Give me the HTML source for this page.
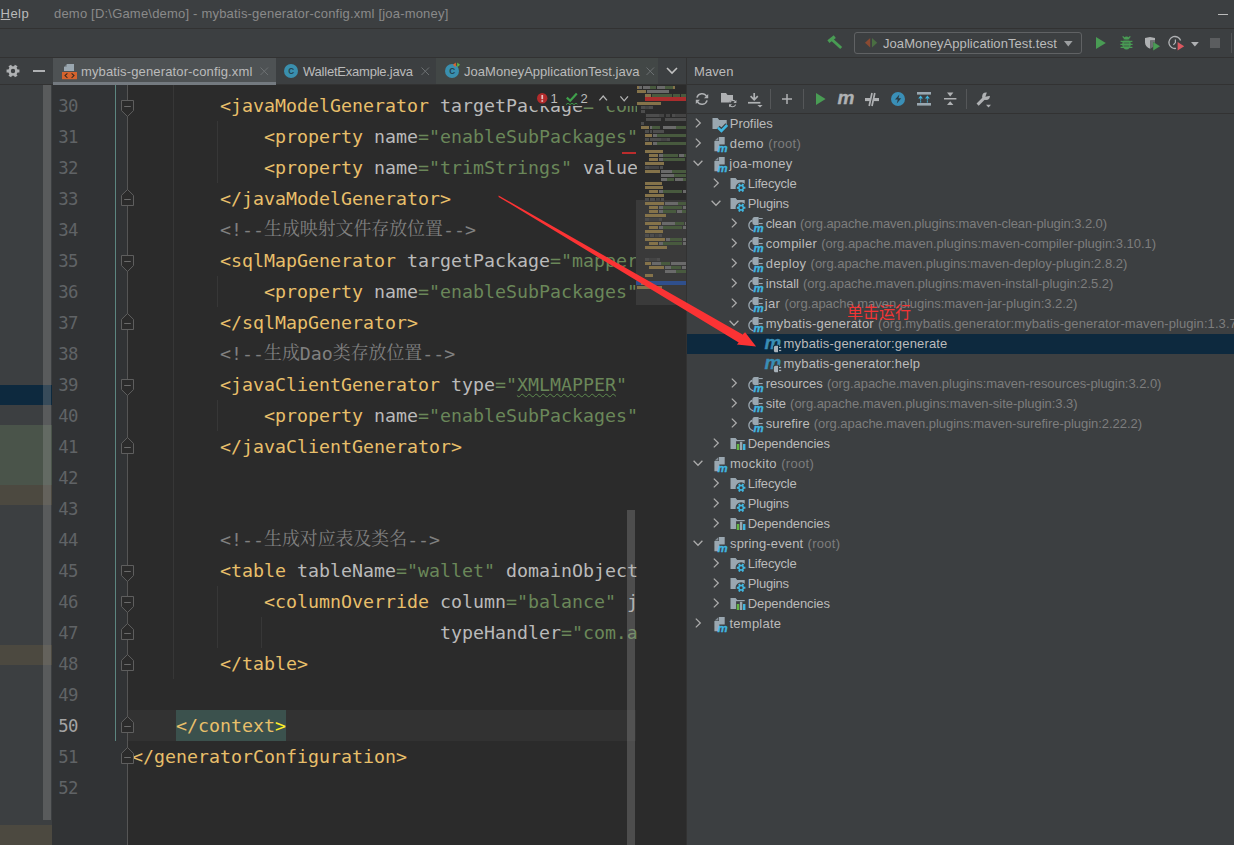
<!DOCTYPE html><html><head><meta charset="utf-8"><title>demo - mybatis-generator-config.xml</title><style>
html,body{margin:0;padding:0;background:#3c3f41;}
body{width:1234px;height:845px;overflow:hidden;position:relative;font-family:"Liberation Sans","Noto Sans CJK SC",sans-serif;font-size:13px;color:#bbbbbb;}
.a{position:absolute;}
svg{overflow:visible;}
.t{position:absolute;white-space:pre;line-height:20px;height:20px;}
.g{color:#7d7d7d;}
.code{position:absolute;white-space:pre;font-family:"DejaVu Sans Mono","Liberation Mono","Noto Serif CJK SC",monospace;font-size:18.27px;line-height:31px;height:31px;color:#a9b7c6;}
.code .k{color:#e8bf6a;}
.code .n{color:#bababa;}
.code .s{color:#6a8759;}
.code .c{color:#808080;}
.code .z{font-family:"Liberation Serif","Noto Serif CJK SC",serif;font-size:17.9px;position:relative;top:-1px;}
.code .w{text-decoration:underline wavy #5f8a4f 1px;text-underline-offset:2px;}
.ln{position:absolute;left:38px;width:40px;text-align:right;letter-spacing:-0.5px;font-family:"DejaVu Sans Mono","Liberation Mono",monospace;font-size:17.3px;line-height:31px;height:31px;color:#606366;}
</style></head><body>
<div class="a" style="left:0;top:28px;width:1234px;height:1px;background:#323232;"></div>
<div class="t" style="left:0.6px;top:4px;color:#bbbbbb;"><span style="letter-spacing:0.438px"><u>H</u>elp</span></div>
<div class="t" style="left:54px;top:4px;color:#8a8a8a;"><span style="letter-spacing:0.198px">demo [D:\Game\demo] - mybatis-generator-config.xml [joa-money]</span></div>
<div class="a" style="left:1218px;top:14px;width:10px;height:1px;background:#bbbbbb;"></div>
<div class="a" style="left:0;top:57px;width:1234px;height:1px;background:#323232;"></div>
<div class="a" style="left:854px;top:32px;width:228px;height:22px;border:1px solid #606264;border-radius:3px;box-sizing:border-box;"></div>
<div class="t" style="left:883px;top:34px;"><span style="letter-spacing:0.072px">JoaMoneyApplicationTest.test</span></div>
<div class="a" style="left:0;top:84px;width:687px;height:1px;background:#323232;"></div>
<div class="a" style="left:53px;top:58px;width:223px;height:27px;background:#4e5254;"></div>
<div class="a" style="left:53px;top:82px;width:223px;height:3px;background:#747a80;"></div>
<div class="a" style="left:436px;top:58px;width:222px;height:26px;background:#424746;"></div>
<div class="t" style="left:81px;top:62px;"><span style="letter-spacing:0.138px">mybatis-generator-config.xml</span></div>
<div class="t" style="left:303px;top:62px;"><span style="letter-spacing:-0.222px">WalletExample.java</span></div>
<div class="t" style="left:464px;top:62px;"><span style="letter-spacing:0.022px">JoaMoneyApplicationTest.java</span></div>
<div class="a" style="left:0;top:385px;width:52px;height:20px;background:#0d293e;"></div>
<div class="a" style="left:0;top:425px;width:52px;height:60px;background:#4a544a;"></div>
<div class="a" style="left:0;top:485px;width:52px;height:20px;background:#4c4940;"></div>
<div class="a" style="left:0;top:645px;width:52px;height:20px;background:#4c4940;"></div>
<div class="a" style="left:0;top:825px;width:52px;height:20px;background:#4c4940;"></div>
<div class="a" style="left:43px;top:85px;width:8px;height:735px;background:rgba(166,166,166,0.28);"></div>
<div class="a" style="left:52px;top:85px;width:634px;height:760px;background:#2b2b2b;"></div>
<div class="a" style="left:52px;top:85px;width:75px;height:760px;background:#313335;"></div>
<div class="a" style="left:127px;top:710px;width:509px;height:31px;background:#323232;"></div>
<div class="a" style="left:115px;top:85px;width:1px;height:656px;background:#5c8680;"></div>
<div class="a" style="left:127px;top:85px;width:1px;height:760px;background:#555555;"></div>
<div class="a" style="left:173px;top:85px;width:1px;height:594px;background:#373737;"></div>
<div class="a" style="left:217px;top:121px;width:1px;height:62px;background:#373737;"></div>
<div class="a" style="left:217px;top:276px;width:1px;height:31px;background:#373737;"></div>
<div class="a" style="left:217px;top:400px;width:1px;height:31px;background:#373737;"></div>
<div class="a" style="left:217px;top:586px;width:1px;height:62px;background:#373737;"></div>
<div class="a" style="left:261px;top:617px;width:1px;height:31px;background:#373737;"></div>
<svg class="a" style="left:121px;top:100px" width="13" height="17" viewBox="0 0 13 17"><path d="M0.5 0.5 H12.5 V10.6 L6.5 16.5 L0.5 10.6Z" fill="#2b2b2b" stroke="#5e5e5e" stroke-width="1"/><path d="M3.2 6.5 H9.8" stroke="#6a6a6a" stroke-width="1"/></svg>
<svg class="a" style="left:121px;top:255px" width="13" height="17" viewBox="0 0 13 17"><path d="M0.5 0.5 H12.5 V10.6 L6.5 16.5 L0.5 10.6Z" fill="#2b2b2b" stroke="#5e5e5e" stroke-width="1"/><path d="M3.2 6.5 H9.8" stroke="#6a6a6a" stroke-width="1"/></svg>
<svg class="a" style="left:121px;top:379px" width="13" height="17" viewBox="0 0 13 17"><path d="M0.5 0.5 H12.5 V10.6 L6.5 16.5 L0.5 10.6Z" fill="#2b2b2b" stroke="#5e5e5e" stroke-width="1"/><path d="M3.2 6.5 H9.8" stroke="#6a6a6a" stroke-width="1"/></svg>
<svg class="a" style="left:121px;top:565px" width="13" height="17" viewBox="0 0 13 17"><path d="M0.5 0.5 H12.5 V10.6 L6.5 16.5 L0.5 10.6Z" fill="#2b2b2b" stroke="#5e5e5e" stroke-width="1"/><path d="M3.2 6.5 H9.8" stroke="#6a6a6a" stroke-width="1"/></svg>
<svg class="a" style="left:121px;top:596px" width="13" height="17" viewBox="0 0 13 17"><path d="M0.5 0.5 H12.5 V10.6 L6.5 16.5 L0.5 10.6Z" fill="#2b2b2b" stroke="#5e5e5e" stroke-width="1"/><path d="M3.2 6.5 H9.8" stroke="#6a6a6a" stroke-width="1"/></svg>
<svg class="a" style="left:121px;top:189px" width="13" height="17" viewBox="0 0 13 17"><path d="M0.5 16.5 H12.5 V6.4 L6.5 0.5 L0.5 6.4Z" fill="#2b2b2b" stroke="#5e5e5e" stroke-width="1"/><path d="M3.2 10.5 H9.8" stroke="#6a6a6a" stroke-width="1"/></svg>
<svg class="a" style="left:121px;top:313px" width="13" height="17" viewBox="0 0 13 17"><path d="M0.5 16.5 H12.5 V6.4 L6.5 0.5 L0.5 6.4Z" fill="#2b2b2b" stroke="#5e5e5e" stroke-width="1"/><path d="M3.2 10.5 H9.8" stroke="#6a6a6a" stroke-width="1"/></svg>
<svg class="a" style="left:121px;top:437px" width="13" height="17" viewBox="0 0 13 17"><path d="M0.5 16.5 H12.5 V6.4 L6.5 0.5 L0.5 6.4Z" fill="#2b2b2b" stroke="#5e5e5e" stroke-width="1"/><path d="M3.2 10.5 H9.8" stroke="#6a6a6a" stroke-width="1"/></svg>
<svg class="a" style="left:121px;top:623px" width="13" height="17" viewBox="0 0 13 17"><path d="M0.5 16.5 H12.5 V6.4 L6.5 0.5 L0.5 6.4Z" fill="#2b2b2b" stroke="#5e5e5e" stroke-width="1"/><path d="M3.2 10.5 H9.8" stroke="#6a6a6a" stroke-width="1"/></svg>
<svg class="a" style="left:121px;top:654px" width="13" height="17" viewBox="0 0 13 17"><path d="M0.5 16.5 H12.5 V6.4 L6.5 0.5 L0.5 6.4Z" fill="#2b2b2b" stroke="#5e5e5e" stroke-width="1"/><path d="M3.2 10.5 H9.8" stroke="#6a6a6a" stroke-width="1"/></svg>
<svg class="a" style="left:121px;top:716px" width="13" height="17" viewBox="0 0 13 17"><path d="M0.5 16.5 H12.5 V6.4 L6.5 0.5 L0.5 6.4Z" fill="#2b2b2b" stroke="#5e5e5e" stroke-width="1"/><path d="M3.2 10.5 H9.8" stroke="#6a6a6a" stroke-width="1"/></svg>
<svg class="a" style="left:121px;top:747px" width="13" height="17" viewBox="0 0 13 17"><path d="M0.5 16.5 H12.5 V6.4 L6.5 0.5 L0.5 6.4Z" fill="#2b2b2b" stroke="#5e5e5e" stroke-width="1"/><path d="M3.2 10.5 H9.8" stroke="#6a6a6a" stroke-width="1"/></svg>
<div class="a" style="left:134px;top:85px;width:503px;height:760px;overflow:hidden;">
<div class="code" style="left:-2px;top:5px;">        <span class="k">&lt;javaModelGenerator</span> <span class="n">targetPackage</span><span class="s">=&quot;com.joa.money.domain&quot;</span></div>
<div class="code" style="left:-2px;top:36px;">            <span class="k">&lt;property</span> <span class="n">name</span><span class="s">=&quot;enableSubPackages&quot;</span> <span class="n">value</span><span class="s">=&quot;true&quot;</span><span class="k">/&gt;</span></div>
<div class="code" style="left:-2px;top:67px;">            <span class="k">&lt;property</span> <span class="n">name</span><span class="s">=&quot;trimStrings&quot;</span> <span class="n">value</span><span class="s">=&quot;true&quot;</span><span class="k">/&gt;</span></div>
<div class="code" style="left:-2px;top:98px;">        <span class="k">&lt;/javaModelGenerator&gt;</span></div>
<div class="code" style="left:-2px;top:129px;">        <span class="c">&lt;!--<span class="z">生成映射文件存放位置</span>--&gt;</span></div>
<div class="code" style="left:-2px;top:160px;">        <span class="k">&lt;sqlMapGenerator</span> <span class="n">targetPackage</span><span class="s">=&quot;mapper&quot;</span> <span class="n">targetProject</span><span class="s">=&quot;src/main/resources&quot;</span><span class="k">&gt;</span></div>
<div class="code" style="left:-2px;top:191px;">            <span class="k">&lt;property</span> <span class="n">name</span><span class="s">=&quot;enableSubPackages&quot;</span> <span class="n">value</span><span class="s">=&quot;true&quot;</span><span class="k">/&gt;</span></div>
<div class="code" style="left:-2px;top:222px;">        <span class="k">&lt;/sqlMapGenerator&gt;</span></div>
<div class="code" style="left:-2px;top:253px;">        <span class="c">&lt;!--<span class="z">生成</span>Dao<span class="z">类存放位置</span>--&gt;</span></div>
<div class="code" style="left:-2px;top:284px;">        <span class="k">&lt;javaClientGenerator</span> <span class="n">type</span><span class="s">=&quot;<span class="w">XMLMAPPER</span>&quot;</span></div>
<div class="code" style="left:-2px;top:315px;">            <span class="k">&lt;property</span> <span class="n">name</span><span class="s">=&quot;enableSubPackages&quot;</span> <span class="n">value</span><span class="s">=&quot;true&quot;</span><span class="k">/&gt;</span></div>
<div class="code" style="left:-2px;top:346px;">        <span class="k">&lt;/javaClientGenerator&gt;</span></div>
<div class="code" style="left:-2px;top:439px;">        <span class="c">&lt;!--<span class="z">生成对应表及类名</span>--&gt;</span></div>
<div class="code" style="left:-2px;top:470px;">        <span class="k">&lt;table</span> <span class="n">tableName</span><span class="s">=&quot;wallet&quot;</span> <span class="n">domainObjectName</span><span class="s">=&quot;Wallet&quot;</span><span class="k">&gt;</span></div>
<div class="code" style="left:-2px;top:501px;">            <span class="k">&lt;columnOverride</span> <span class="n">column</span><span class="s">=&quot;balance&quot;</span> <span class="n">javaType</span><span class="s">=&quot;java.math.BigDecimal&quot;</span></div>
<div class="code" style="left:-2px;top:532px;">                            <span class="n">typeHandler</span><span class="s">=&quot;com.alibaba.fastjson.TypeHandler&quot;</span><span class="k">/&gt;</span></div>
<div class="code" style="left:-2px;top:563px;">        <span class="k">&lt;/table&gt;</span></div>
<div class="code" style="left:-2px;top:625px;">    <span style="background:#3b514d;display:inline-block;height:31px;vertical-align:top;"><span class="k">&lt;/context</span><span style="color:#ffef28;">&gt;</span></span></div>
<div class="code" style="left:-2px;top:656px;"><span class="k">&lt;/generatorConfiguration&gt;</span></div>
</div>
<div class="ln" style="top:91px;color:#606366;">30</div>
<div class="ln" style="top:122px;color:#606366;">31</div>
<div class="ln" style="top:153px;color:#606366;">32</div>
<div class="ln" style="top:184px;color:#606366;">33</div>
<div class="ln" style="top:215px;color:#606366;">34</div>
<div class="ln" style="top:246px;color:#606366;">35</div>
<div class="ln" style="top:277px;color:#606366;">36</div>
<div class="ln" style="top:308px;color:#606366;">37</div>
<div class="ln" style="top:339px;color:#606366;">38</div>
<div class="ln" style="top:370px;color:#606366;">39</div>
<div class="ln" style="top:401px;color:#606366;">40</div>
<div class="ln" style="top:432px;color:#606366;">41</div>
<div class="ln" style="top:463px;color:#606366;">42</div>
<div class="ln" style="top:494px;color:#606366;">43</div>
<div class="ln" style="top:525px;color:#606366;">44</div>
<div class="ln" style="top:556px;color:#606366;">45</div>
<div class="ln" style="top:587px;color:#606366;">46</div>
<div class="ln" style="top:618px;color:#606366;">47</div>
<div class="ln" style="top:649px;color:#606366;">48</div>
<div class="ln" style="top:680px;color:#606366;">49</div>
<div class="ln" style="top:711px;color:#a4a3a3;">50</div>
<div class="ln" style="top:742px;color:#606366;">51</div>
<div class="ln" style="top:773px;color:#606366;">52</div>
<svg class="a" style="left:637px;top:85px" width="49" height="420" viewBox="0 0 49 420"><rect x="-1" y="115" width="50" height="105" fill="#3a3a3a"/><rect x="8" y="12" width="41" height="4" fill="#aa2d2d"/><rect x="-1" y="196" width="50" height="4" fill="#2f4f8c"/><rect x="4" y="197" width="10" height="3" fill="#7d7660"/><rect x="0" y="1" width="2" height="3" fill="#85734a"/><rect x="2" y="1" width="3" height="3" fill="#6a6a6a"/><rect x="6" y="1" width="7" height="3" fill="#6a6a6a"/><rect x="13" y="1" width="6" height="3" fill="#485a3e"/><rect x="20" y="1" width="8" height="3" fill="#6a6a6a"/><rect x="28" y="1" width="8" height="3" fill="#485a3e"/><rect x="36" y="1" width="2" height="3" fill="#85734a"/><rect x="0" y="5" width="9" height="3" fill="#85734a"/><rect x="10" y="5" width="22" height="3" fill="#6a6a6a"/><rect x="8" y="9" width="6" height="3" fill="#85734a"/><rect x="15" y="9" width="20" height="3" fill="#485a3e"/><rect x="36" y="9" width="7" height="3" fill="#485a3e"/><rect x="44" y="9" width="5" height="3" fill="#485a3e"/><rect x="0" y="17" width="24" height="3" fill="#85734a"/><rect x="4" y="21" width="4" height="3" fill="#4d4d4d"/><rect x="8" y="21" width="4" height="3" fill="#444444"/><rect x="12" y="21" width="4" height="3" fill="#4d4d4d"/><rect x="4" y="25" width="4" height="3" fill="#4d4d4d"/><rect x="9" y="29" width="13" height="3" fill="#4d4d4d"/><rect x="22" y="29" width="5" height="3" fill="#444444"/><rect x="29" y="29" width="4" height="3" fill="#444444"/><rect x="35" y="29" width="3" height="3" fill="#4d4d4d"/><rect x="38" y="29" width="11" height="3" fill="#444444"/><rect x="9" y="33" width="15" height="3" fill="#4d4d4d"/><rect x="28" y="33" width="21" height="3" fill="#4d4d4d"/><rect x="4" y="37" width="3" height="3" fill="#4d4d4d"/><rect x="4" y="41" width="8" height="3" fill="#85734a"/><rect x="13" y="41" width="2" height="3" fill="#6a6a6a"/><rect x="15" y="41" width="8" height="3" fill="#485a3e"/><rect x="26" y="41" width="13" height="3" fill="#6a6a6a"/><rect x="39" y="41" width="10" height="3" fill="#485a3e"/><rect x="8" y="45" width="4" height="3" fill="#4d4d4d"/><rect x="13" y="45" width="2" height="3" fill="#4d4d4d"/><rect x="16" y="45" width="11" height="3" fill="#4d4d4d"/><rect x="8" y="49" width="7" height="3" fill="#85734a"/><rect x="16" y="49" width="4" height="3" fill="#6a6a6a"/><rect x="20" y="49" width="29" height="3" fill="#485a3e"/><rect x="8" y="53" width="4" height="3" fill="#4d4d4d"/><rect x="13" y="53" width="11" height="3" fill="#4d4d4d"/><rect x="24" y="53" width="6" height="3" fill="#444444"/><rect x="30" y="53" width="3" height="3" fill="#4d4d4d"/><rect x="8" y="57" width="7" height="3" fill="#85734a"/><rect x="16" y="57" width="4" height="3" fill="#6a6a6a"/><rect x="20" y="57" width="29" height="3" fill="#485a3e"/><rect x="8" y="65" width="18" height="3" fill="#85734a"/><rect x="12" y="69" width="9" height="3" fill="#85734a"/><rect x="22" y="69" width="4" height="3" fill="#6a6a6a"/><rect x="26" y="69" width="15" height="3" fill="#485a3e"/><rect x="42" y="69" width="5" height="3" fill="#6a6a6a"/><rect x="47" y="69" width="2" height="3" fill="#485a3e"/><rect x="12" y="73" width="9" height="3" fill="#85734a"/><rect x="22" y="73" width="4" height="3" fill="#6a6a6a"/><rect x="26" y="73" width="22" height="3" fill="#485a3e"/><rect x="8" y="77" width="19" height="3" fill="#85734a"/><rect x="8" y="81" width="4" height="3" fill="#4d4d4d"/><rect x="12" y="81" width="10" height="3" fill="#444444"/><rect x="23" y="81" width="3" height="3" fill="#4d4d4d"/><rect x="8" y="85" width="15" height="3" fill="#85734a"/><rect x="24" y="85" width="11" height="3" fill="#6a6a6a"/><rect x="35" y="85" width="14" height="3" fill="#485a3e"/><rect x="24" y="89" width="13" height="3" fill="#6a6a6a"/><rect x="37" y="89" width="12" height="3" fill="#485a3e"/><rect x="24" y="93" width="6" height="3" fill="#6a6a6a"/><rect x="30" y="93" width="7" height="3" fill="#485a3e"/><rect x="38" y="93" width="8" height="3" fill="#6a6a6a"/><rect x="46" y="93" width="3" height="3" fill="#485a3e"/><rect x="8" y="97" width="17" height="3" fill="#85734a"/><rect x="8" y="101" width="18" height="3" fill="#85734a"/><rect x="12" y="105" width="9" height="3" fill="#85734a"/><rect x="22" y="105" width="4" height="3" fill="#6a6a6a"/><rect x="26" y="105" width="19" height="3" fill="#485a3e"/><rect x="46" y="105" width="3" height="3" fill="#6a6a6a"/><rect x="8" y="109" width="19" height="3" fill="#85734a"/><rect x="8" y="113" width="4" height="3" fill="#4d4d4d"/><rect x="13" y="113" width="5" height="3" fill="#4d4d4d"/><rect x="19" y="113" width="4" height="3" fill="#444444"/><rect x="24" y="113" width="3" height="3" fill="#4d4d4d"/><rect x="8" y="117" width="19" height="3" fill="#85734a"/><rect x="28" y="117" width="13" height="3" fill="#6a6a6a"/><rect x="41" y="117" width="8" height="3" fill="#485a3e"/><rect x="12" y="121" width="9" height="3" fill="#85734a"/><rect x="22" y="121" width="4" height="3" fill="#6a6a6a"/><rect x="26" y="121" width="19" height="3" fill="#485a3e"/><rect x="46" y="121" width="3" height="3" fill="#6a6a6a"/><rect x="12" y="125" width="9" height="3" fill="#85734a"/><rect x="22" y="125" width="4" height="3" fill="#6a6a6a"/><rect x="26" y="125" width="13" height="3" fill="#485a3e"/><rect x="40" y="125" width="5" height="3" fill="#6a6a6a"/><rect x="45" y="125" width="4" height="3" fill="#485a3e"/><rect x="8" y="129" width="21" height="3" fill="#85734a"/><rect x="8" y="133" width="4" height="3" fill="#4d4d4d"/><rect x="12" y="133" width="10" height="3" fill="#444444"/><rect x="22" y="133" width="3" height="3" fill="#4d4d4d"/><rect x="8" y="137" width="16" height="3" fill="#85734a"/><rect x="25" y="137" width="13" height="3" fill="#6a6a6a"/><rect x="38" y="137" width="9" height="3" fill="#485a3e"/><rect x="48" y="137" width="1" height="3" fill="#6a6a6a"/><rect x="12" y="141" width="9" height="3" fill="#85734a"/><rect x="22" y="141" width="4" height="3" fill="#6a6a6a"/><rect x="26" y="141" width="19" height="3" fill="#485a3e"/><rect x="46" y="141" width="3" height="3" fill="#6a6a6a"/><rect x="8" y="145" width="18" height="3" fill="#85734a"/><rect x="8" y="149" width="4" height="3" fill="#4d4d4d"/><rect x="13" y="149" width="4" height="3" fill="#4d4d4d"/><rect x="18" y="149" width="4" height="3" fill="#444444"/><rect x="22" y="149" width="3" height="3" fill="#4d4d4d"/><rect x="8" y="153" width="20" height="3" fill="#85734a"/><rect x="29" y="153" width="4" height="3" fill="#6a6a6a"/><rect x="33" y="153" width="12" height="3" fill="#485a3e"/><rect x="46" y="153" width="3" height="3" fill="#6a6a6a"/><rect x="12" y="157" width="9" height="3" fill="#85734a"/><rect x="22" y="157" width="4" height="3" fill="#6a6a6a"/><rect x="26" y="157" width="19" height="3" fill="#485a3e"/><rect x="46" y="157" width="3" height="3" fill="#6a6a6a"/><rect x="8" y="161" width="22" height="3" fill="#85734a"/><rect x="8" y="173" width="4" height="3" fill="#4d4d4d"/><rect x="12" y="173" width="8" height="3" fill="#444444"/><rect x="20" y="173" width="3" height="3" fill="#4d4d4d"/><rect x="8" y="177" width="6" height="3" fill="#85734a"/><rect x="15" y="177" width="9" height="3" fill="#6a6a6a"/><rect x="24" y="177" width="9" height="3" fill="#485a3e"/><rect x="34" y="177" width="15" height="3" fill="#6a6a6a"/><rect x="12" y="181" width="15" height="3" fill="#85734a"/><rect x="28" y="181" width="6" height="3" fill="#6a6a6a"/><rect x="34" y="181" width="10" height="3" fill="#485a3e"/><rect x="45" y="181" width="4" height="3" fill="#6a6a6a"/><rect x="28" y="185" width="11" height="3" fill="#6a6a6a"/><rect x="39" y="185" width="10" height="3" fill="#485a3e"/><rect x="8" y="189" width="8" height="3" fill="#85734a"/><rect x="0" y="201" width="25" height="3" fill="#85734a"/></svg>
<div class="a" style="left:627px;top:510px;width:8px;height:335px;background:rgba(166,166,166,0.28);"></div>
<div class="a" style="left:686px;top:58px;width:1px;height:787px;background:#323232;"></div>
<div class="t" style="left:694px;top:62px;"><span style="letter-spacing:0.094px">Maven</span></div>
<div class="a" style="left:687px;top:84px;width:547px;height:1px;background:#323232;"></div>
<div class="a" style="left:687px;top:113px;width:547px;height:1px;background:#323232;"></div>
<div class="a" style="left:687px;top:334px;width:547px;height:20px;background:#0d293e;"></div>
<div class="a" style="left:687px;top:113px;width:547px;height:732px;overflow:hidden;">
<svg class="a" style="left:4.6px;top:4.4px" width="12" height="12" viewBox="0 0 12 12"><path d="M3.8 1.6 L8.3 6 L3.8 10.4" fill="none" stroke="#adadad" stroke-width="1.25"/></svg>
<svg class="a" style="left:24.5px;top:3px" width="17" height="17" viewBox="0 0 17 17"><path d="M0.5 2 H5.6 L7.2 4 H14.7 V13 H0.5Z" fill="#9aa7b0"/><path d="M5.9 11.6 L9.4 14.9 L15.2 9" fill="none" stroke="#3c3f41" stroke-width="5"/><path d="M5.9 11.6 L9.4 14.9 L15.2 9" fill="none" stroke="#40b6e0" stroke-width="2.5"/></svg>
<div class="t" style="left:42.8px;top:1px;"><span style="letter-spacing:-0.057px">Profiles</span></div>
<svg class="a" style="left:4.6px;top:24.4px" width="12" height="12" viewBox="0 0 12 12"><path d="M3.8 1.6 L8.3 6 L3.8 10.4" fill="none" stroke="#adadad" stroke-width="1.25"/></svg>
<svg class="a" style="left:24.5px;top:23px" width="17" height="17" viewBox="0 0 17 17"><path d="M6.9 1.1 H12.7 V8.6 H7.3 V15.3 H2.4 V5 H6.9Z" fill="#9aa7b0"/><path d="M6.3 1.3 V4.4 H2.7Z" fill="#9aa7b0" opacity="0.75"/><text x="5.6" y="15.7" font-family="Liberation Sans, sans-serif" font-style="italic" font-weight="bold" font-size="11.4" fill="#40b6e0" stroke="#40b6e0" stroke-width="0.35">m</text></svg>
<div class="t" style="left:42.8px;top:21px;"><span style="letter-spacing:0.417px">demo</span></div>
<div class="t g" style="left:81.3px;top:21px;"><span style="letter-spacing:0.290px">(root)</span></div>
<svg class="a" style="left:4.6px;top:44.4px" width="12" height="12" viewBox="0 0 12 12"><path d="M1.6 3.8 L6 8.3 L10.4 3.8" fill="none" stroke="#adadad" stroke-width="1.25"/></svg>
<svg class="a" style="left:24.5px;top:43px" width="17" height="17" viewBox="0 0 17 17"><path d="M6.9 1.1 H12.7 V8.6 H7.3 V15.3 H2.4 V5 H6.9Z" fill="#9aa7b0"/><path d="M6.3 1.3 V4.4 H2.7Z" fill="#9aa7b0" opacity="0.75"/><text x="5.6" y="15.7" font-family="Liberation Sans, sans-serif" font-style="italic" font-weight="bold" font-size="11.4" fill="#40b6e0" stroke="#40b6e0" stroke-width="0.35">m</text></svg>
<div class="t" style="left:42.2px;top:41px;"><span style="letter-spacing:0.311px">joa-money</span></div>
<svg class="a" style="left:22.6px;top:64.4px" width="12" height="12" viewBox="0 0 12 12"><path d="M3.8 1.6 L8.3 6 L3.8 10.4" fill="none" stroke="#adadad" stroke-width="1.25"/></svg>
<svg class="a" style="left:42.5px;top:63px" width="17" height="17" viewBox="0 0 17 17"><path d="M0.5 2 H5.6 L7.2 4 H14.7 V13 H0.5Z" fill="#9aa7b0"/><circle cx="11.1" cy="11.8" r="5.5" fill="#3c3f41"/><path d="M15.38 10.80 L15.38 12.80 L14.05 12.76 L13.40 13.87 L14.11 15.01 L12.37 16.01 L11.74 14.83 L10.46 14.83 L9.83 16.01 L8.09 15.01 L8.80 13.87 L8.15 12.76 L6.82 12.80 L6.82 10.80 L8.15 10.84 L8.80 9.73 L8.09 8.59 L9.83 7.59 L10.46 8.77 L11.74 8.77 L12.37 7.59 L14.11 8.59 L13.40 9.73 L14.05 10.84Z M9.60 11.80 a1.50 1.50 0 1 0 3.00 0 a1.50 1.50 0 1 0 -3.00 0Z" fill="#40b6e0" fill-rule="evenodd"/></svg>
<div class="t" style="left:60.8px;top:61px;"><span style="letter-spacing:-0.220px">Lifecycle</span></div>
<svg class="a" style="left:22.6px;top:84.4px" width="12" height="12" viewBox="0 0 12 12"><path d="M1.6 3.8 L6 8.3 L10.4 3.8" fill="none" stroke="#adadad" stroke-width="1.25"/></svg>
<svg class="a" style="left:42.5px;top:83px" width="17" height="17" viewBox="0 0 17 17"><path d="M0.5 2 H5.6 L7.2 4 H14.7 V13 H0.5Z" fill="#9aa7b0"/><circle cx="11.1" cy="11.8" r="5.5" fill="#3c3f41"/><path d="M15.38 10.80 L15.38 12.80 L14.05 12.76 L13.40 13.87 L14.11 15.01 L12.37 16.01 L11.74 14.83 L10.46 14.83 L9.83 16.01 L8.09 15.01 L8.80 13.87 L8.15 12.76 L6.82 12.80 L6.82 10.80 L8.15 10.84 L8.80 9.73 L8.09 8.59 L9.83 7.59 L10.46 8.77 L11.74 8.77 L12.37 7.59 L14.11 8.59 L13.40 9.73 L14.05 10.84Z M9.60 11.80 a1.50 1.50 0 1 0 3.00 0 a1.50 1.50 0 1 0 -3.00 0Z" fill="#40b6e0" fill-rule="evenodd"/></svg>
<div class="t" style="left:60.8px;top:81px;"><span style="letter-spacing:-0.220px">Plugins</span></div>
<svg class="a" style="left:40.6px;top:104.4px" width="12" height="12" viewBox="0 0 12 12"><path d="M3.8 1.6 L8.3 6 L3.8 10.4" fill="none" stroke="#adadad" stroke-width="1.25"/></svg>
<svg class="a" style="left:60.5px;top:103px" width="17" height="17" viewBox="0 0 17 17"><path d="M6.6 1 H10.6 V8.9 H6.6 C5.2 8.9 4.4 7.6 4.4 6.4 V3.5 C4.4 2.3 5.2 1 6.6 1Z" fill="#9aa7b0"/><rect x="10.6" y="2" width="4.1" height="1.1" fill="#9aa7b0"/><rect x="10.6" y="7" width="4.1" height="1.1" fill="#9aa7b0"/><path d="M4.2 4.4 C0.2 6 -1 12.6 5.3 14.8" fill="none" stroke="#9aa7b0" stroke-width="1.3"/><path d="M4.4 3.4 L2 5.2 L4.4 6Z" fill="#9aa7b0"/><text x="5.6" y="15.9" font-family="Liberation Sans, sans-serif" font-style="italic" font-weight="bold" font-size="11.4" fill="#40b6e0" stroke="#40b6e0" stroke-width="0.35">m</text></svg>
<div class="t" style="left:78.8px;top:101px;"><span style="letter-spacing:-0.176px">clean</span></div>
<div class="t g" style="left:113.1px;top:101px;"><span style="letter-spacing:-0.075px">(org.apache.maven.plugins:maven-clean-plugin:3.2.0)</span></div>
<svg class="a" style="left:40.6px;top:124.4px" width="12" height="12" viewBox="0 0 12 12"><path d="M3.8 1.6 L8.3 6 L3.8 10.4" fill="none" stroke="#adadad" stroke-width="1.25"/></svg>
<svg class="a" style="left:60.5px;top:123px" width="17" height="17" viewBox="0 0 17 17"><path d="M6.6 1 H10.6 V8.9 H6.6 C5.2 8.9 4.4 7.6 4.4 6.4 V3.5 C4.4 2.3 5.2 1 6.6 1Z" fill="#9aa7b0"/><rect x="10.6" y="2" width="4.1" height="1.1" fill="#9aa7b0"/><rect x="10.6" y="7" width="4.1" height="1.1" fill="#9aa7b0"/><path d="M4.2 4.4 C0.2 6 -1 12.6 5.3 14.8" fill="none" stroke="#9aa7b0" stroke-width="1.3"/><path d="M4.4 3.4 L2 5.2 L4.4 6Z" fill="#9aa7b0"/><text x="5.6" y="15.9" font-family="Liberation Sans, sans-serif" font-style="italic" font-weight="bold" font-size="11.4" fill="#40b6e0" stroke="#40b6e0" stroke-width="0.35">m</text></svg>
<div class="t" style="left:78.8px;top:121px;"><span style="letter-spacing:0.259px">compiler</span></div>
<div class="t g" style="left:134.3px;top:121px;"><span style="letter-spacing:-0.024px">(org.apache.maven.plugins:maven-compiler-plugin:3.10.1)</span></div>
<svg class="a" style="left:40.6px;top:144.4px" width="12" height="12" viewBox="0 0 12 12"><path d="M3.8 1.6 L8.3 6 L3.8 10.4" fill="none" stroke="#adadad" stroke-width="1.25"/></svg>
<svg class="a" style="left:60.5px;top:143px" width="17" height="17" viewBox="0 0 17 17"><path d="M6.6 1 H10.6 V8.9 H6.6 C5.2 8.9 4.4 7.6 4.4 6.4 V3.5 C4.4 2.3 5.2 1 6.6 1Z" fill="#9aa7b0"/><rect x="10.6" y="2" width="4.1" height="1.1" fill="#9aa7b0"/><rect x="10.6" y="7" width="4.1" height="1.1" fill="#9aa7b0"/><path d="M4.2 4.4 C0.2 6 -1 12.6 5.3 14.8" fill="none" stroke="#9aa7b0" stroke-width="1.3"/><path d="M4.4 3.4 L2 5.2 L4.4 6Z" fill="#9aa7b0"/><text x="5.6" y="15.9" font-family="Liberation Sans, sans-serif" font-style="italic" font-weight="bold" font-size="11.4" fill="#40b6e0" stroke="#40b6e0" stroke-width="0.35">m</text></svg>
<div class="t" style="left:78.8px;top:141px;"><span style="letter-spacing:0.398px">deploy</span></div>
<div class="t g" style="left:123.6px;top:141px;"><span style="letter-spacing:-0.026px">(org.apache.maven.plugins:maven-deploy-plugin:2.8.2)</span></div>
<svg class="a" style="left:40.6px;top:164.4px" width="12" height="12" viewBox="0 0 12 12"><path d="M3.8 1.6 L8.3 6 L3.8 10.4" fill="none" stroke="#adadad" stroke-width="1.25"/></svg>
<svg class="a" style="left:60.5px;top:163px" width="17" height="17" viewBox="0 0 17 17"><path d="M6.6 1 H10.6 V8.9 H6.6 C5.2 8.9 4.4 7.6 4.4 6.4 V3.5 C4.4 2.3 5.2 1 6.6 1Z" fill="#9aa7b0"/><rect x="10.6" y="2" width="4.1" height="1.1" fill="#9aa7b0"/><rect x="10.6" y="7" width="4.1" height="1.1" fill="#9aa7b0"/><path d="M4.2 4.4 C0.2 6 -1 12.6 5.3 14.8" fill="none" stroke="#9aa7b0" stroke-width="1.3"/><path d="M4.4 3.4 L2 5.2 L4.4 6Z" fill="#9aa7b0"/><text x="5.6" y="15.9" font-family="Liberation Sans, sans-serif" font-style="italic" font-weight="bold" font-size="11.4" fill="#40b6e0" stroke="#40b6e0" stroke-width="0.35">m</text></svg>
<div class="t" style="left:78.8px;top:161px;"><span style="letter-spacing:-0.007px">install</span></div>
<div class="t g" style="left:116.1px;top:161px;"><span style="letter-spacing:-0.053px">(org.apache.maven.plugins:maven-install-plugin:2.5.2)</span></div>
<svg class="a" style="left:40.6px;top:184.4px" width="12" height="12" viewBox="0 0 12 12"><path d="M3.8 1.6 L8.3 6 L3.8 10.4" fill="none" stroke="#adadad" stroke-width="1.25"/></svg>
<svg class="a" style="left:60.5px;top:183px" width="17" height="17" viewBox="0 0 17 17"><path d="M6.6 1 H10.6 V8.9 H6.6 C5.2 8.9 4.4 7.6 4.4 6.4 V3.5 C4.4 2.3 5.2 1 6.6 1Z" fill="#9aa7b0"/><rect x="10.6" y="2" width="4.1" height="1.1" fill="#9aa7b0"/><rect x="10.6" y="7" width="4.1" height="1.1" fill="#9aa7b0"/><path d="M4.2 4.4 C0.2 6 -1 12.6 5.3 14.8" fill="none" stroke="#9aa7b0" stroke-width="1.3"/><path d="M4.4 3.4 L2 5.2 L4.4 6Z" fill="#9aa7b0"/><text x="5.6" y="15.9" font-family="Liberation Sans, sans-serif" font-style="italic" font-weight="bold" font-size="11.4" fill="#40b6e0" stroke="#40b6e0" stroke-width="0.35">m</text></svg>
<div class="t" style="left:77.8px;top:181px;"><span style="letter-spacing:0.349px">jar</span></div>
<div class="t g" style="left:97.6px;top:181px;"><span style="letter-spacing:-0.029px">(org.apache.maven.plugins:maven-jar-plugin:3.2.2)</span></div>
<svg class="a" style="left:40.6px;top:204.4px" width="12" height="12" viewBox="0 0 12 12"><path d="M1.6 3.8 L6 8.3 L10.4 3.8" fill="none" stroke="#adadad" stroke-width="1.25"/></svg>
<svg class="a" style="left:60.5px;top:203px" width="17" height="17" viewBox="0 0 17 17"><path d="M6.6 1 H10.6 V8.9 H6.6 C5.2 8.9 4.4 7.6 4.4 6.4 V3.5 C4.4 2.3 5.2 1 6.6 1Z" fill="#9aa7b0"/><rect x="10.6" y="2" width="4.1" height="1.1" fill="#9aa7b0"/><rect x="10.6" y="7" width="4.1" height="1.1" fill="#9aa7b0"/><path d="M4.2 4.4 C0.2 6 -1 12.6 5.3 14.8" fill="none" stroke="#9aa7b0" stroke-width="1.3"/><path d="M4.4 3.4 L2 5.2 L4.4 6Z" fill="#9aa7b0"/><text x="5.6" y="15.9" font-family="Liberation Sans, sans-serif" font-style="italic" font-weight="bold" font-size="11.4" fill="#40b6e0" stroke="#40b6e0" stroke-width="0.35">m</text></svg>
<div class="t" style="left:78.8px;top:201px;"><span style="letter-spacing:0.195px">mybatis-generator</span></div>
<div class="t g" style="left:191px;top:201px;"><span style="letter-spacing:0.082px">(org.mybatis.generator:mybatis-generator-maven-plugin:1.3.7)</span></div>
<svg class="a" style="left:78px;top:223px" width="18" height="17" viewBox="0 0 18 17"><text x="-0.4" y="12.9" font-family="Liberation Sans, sans-serif" font-style="italic" font-weight="bold" font-size="18.8" fill="#3a8db5" stroke="#3a8db5" stroke-width="0.35">m</text><path d="M10.6 9.8 H13 V16.2 H10.6 C9.5 16.2 8.9 15.3 8.9 14.4 V11.6 C8.9 10.7 9.5 9.8 10.6 9.8Z" fill="#0d293e" stroke="#0d293e" stroke-width="2"/><rect x="13" y="10" width="4.2" height="6" fill="#0d293e"/><path d="M10.6 9.8 H13 V16.2 H10.6 C9.5 16.2 8.9 15.3 8.9 14.4 V11.6 C8.9 10.7 9.5 9.8 10.6 9.8Z" fill="#a7b1b9"/><rect x="14" y="10.9" width="2.2" height="1.2" fill="#a7b1b9"/><rect x="14" y="13.9" width="2.2" height="1.2" fill="#a7b1b9"/></svg>
<div class="t" style="left:96.6px;top:221px;"><span style="letter-spacing:0.161px">mybatis-generator:generate</span></div>
<svg class="a" style="left:78px;top:243px" width="18" height="17" viewBox="0 0 18 17"><text x="-0.4" y="12.9" font-family="Liberation Sans, sans-serif" font-style="italic" font-weight="bold" font-size="18.8" fill="#3a8db5" stroke="#3a8db5" stroke-width="0.35">m</text><path d="M10.6 9.8 H13 V16.2 H10.6 C9.5 16.2 8.9 15.3 8.9 14.4 V11.6 C8.9 10.7 9.5 9.8 10.6 9.8Z" fill="#3c3f41" stroke="#3c3f41" stroke-width="2"/><rect x="13" y="10" width="4.2" height="6" fill="#3c3f41"/><path d="M10.6 9.8 H13 V16.2 H10.6 C9.5 16.2 8.9 15.3 8.9 14.4 V11.6 C8.9 10.7 9.5 9.8 10.6 9.8Z" fill="#a7b1b9"/><rect x="14" y="10.9" width="2.2" height="1.2" fill="#a7b1b9"/><rect x="14" y="13.9" width="2.2" height="1.2" fill="#a7b1b9"/></svg>
<div class="t" style="left:96.6px;top:241px;"><span style="letter-spacing:0.161px">mybatis-generator:help</span></div>
<svg class="a" style="left:40.6px;top:264.4px" width="12" height="12" viewBox="0 0 12 12"><path d="M3.8 1.6 L8.3 6 L3.8 10.4" fill="none" stroke="#adadad" stroke-width="1.25"/></svg>
<svg class="a" style="left:60.5px;top:263px" width="17" height="17" viewBox="0 0 17 17"><path d="M6.6 1 H10.6 V8.9 H6.6 C5.2 8.9 4.4 7.6 4.4 6.4 V3.5 C4.4 2.3 5.2 1 6.6 1Z" fill="#9aa7b0"/><rect x="10.6" y="2" width="4.1" height="1.1" fill="#9aa7b0"/><rect x="10.6" y="7" width="4.1" height="1.1" fill="#9aa7b0"/><path d="M4.2 4.4 C0.2 6 -1 12.6 5.3 14.8" fill="none" stroke="#9aa7b0" stroke-width="1.3"/><path d="M4.4 3.4 L2 5.2 L4.4 6Z" fill="#9aa7b0"/><text x="5.6" y="15.9" font-family="Liberation Sans, sans-serif" font-style="italic" font-weight="bold" font-size="11.4" fill="#40b6e0" stroke="#40b6e0" stroke-width="0.35">m</text></svg>
<div class="t" style="left:78.8px;top:261px;"><span style="letter-spacing:-0.020px">resources</span></div>
<div class="t g" style="left:140px;top:261px;"><span style="letter-spacing:-0.043px">(org.apache.maven.plugins:maven-resources-plugin:3.2.0)</span></div>
<svg class="a" style="left:40.6px;top:284.4px" width="12" height="12" viewBox="0 0 12 12"><path d="M3.8 1.6 L8.3 6 L3.8 10.4" fill="none" stroke="#adadad" stroke-width="1.25"/></svg>
<svg class="a" style="left:60.5px;top:283px" width="17" height="17" viewBox="0 0 17 17"><path d="M6.6 1 H10.6 V8.9 H6.6 C5.2 8.9 4.4 7.6 4.4 6.4 V3.5 C4.4 2.3 5.2 1 6.6 1Z" fill="#9aa7b0"/><rect x="10.6" y="2" width="4.1" height="1.1" fill="#9aa7b0"/><rect x="10.6" y="7" width="4.1" height="1.1" fill="#9aa7b0"/><path d="M4.2 4.4 C0.2 6 -1 12.6 5.3 14.8" fill="none" stroke="#9aa7b0" stroke-width="1.3"/><path d="M4.4 3.4 L2 5.2 L4.4 6Z" fill="#9aa7b0"/><text x="5.6" y="15.9" font-family="Liberation Sans, sans-serif" font-style="italic" font-weight="bold" font-size="11.4" fill="#40b6e0" stroke="#40b6e0" stroke-width="0.35">m</text></svg>
<div class="t" style="left:78.8px;top:281px;"><span style="letter-spacing:-0.009px">site</span></div>
<div class="t g" style="left:103.1px;top:281px;"><span style="letter-spacing:-0.032px">(org.apache.maven.plugins:maven-site-plugin:3.3)</span></div>
<svg class="a" style="left:40.6px;top:304.4px" width="12" height="12" viewBox="0 0 12 12"><path d="M3.8 1.6 L8.3 6 L3.8 10.4" fill="none" stroke="#adadad" stroke-width="1.25"/></svg>
<svg class="a" style="left:60.5px;top:303px" width="17" height="17" viewBox="0 0 17 17"><path d="M6.6 1 H10.6 V8.9 H6.6 C5.2 8.9 4.4 7.6 4.4 6.4 V3.5 C4.4 2.3 5.2 1 6.6 1Z" fill="#9aa7b0"/><rect x="10.6" y="2" width="4.1" height="1.1" fill="#9aa7b0"/><rect x="10.6" y="7" width="4.1" height="1.1" fill="#9aa7b0"/><path d="M4.2 4.4 C0.2 6 -1 12.6 5.3 14.8" fill="none" stroke="#9aa7b0" stroke-width="1.3"/><path d="M4.4 3.4 L2 5.2 L4.4 6Z" fill="#9aa7b0"/><text x="5.6" y="15.9" font-family="Liberation Sans, sans-serif" font-style="italic" font-weight="bold" font-size="11.4" fill="#40b6e0" stroke="#40b6e0" stroke-width="0.35">m</text></svg>
<div class="t" style="left:78.8px;top:301px;"><span style="letter-spacing:0.068px">surefire</span></div>
<div class="t g" style="left:126.8px;top:301px;"><span style="letter-spacing:-0.037px">(org.apache.maven.plugins:maven-surefire-plugin:2.22.2)</span></div>
<svg class="a" style="left:22.6px;top:324.4px" width="12" height="12" viewBox="0 0 12 12"><path d="M3.8 1.6 L8.3 6 L3.8 10.4" fill="none" stroke="#adadad" stroke-width="1.25"/></svg>
<svg class="a" style="left:42.5px;top:323px" width="17" height="17" viewBox="0 0 17 17"><path d="M0.5 2 H5.6 L7.2 4 H14.7 V13 H0.5Z" fill="#9aa7b0"/><rect x="6.1" y="5.2" width="10" height="10" fill="#3c3f41"/><rect x="6.8" y="8" width="2.4" height="6" fill="#62b543"/><rect x="9.9" y="5.8" width="2.4" height="8.2" fill="#9aa7b0"/><rect x="13" y="8" width="2.4" height="6" fill="#40b6e0"/></svg>
<div class="t" style="left:60.8px;top:321px;"><span style="letter-spacing:-0.094px">Dependencies</span></div>
<svg class="a" style="left:4.6px;top:344.4px" width="12" height="12" viewBox="0 0 12 12"><path d="M1.6 3.8 L6 8.3 L10.4 3.8" fill="none" stroke="#adadad" stroke-width="1.25"/></svg>
<svg class="a" style="left:24.5px;top:343px" width="17" height="17" viewBox="0 0 17 17"><path d="M6.9 1.1 H12.7 V8.6 H7.3 V15.3 H2.4 V5 H6.9Z" fill="#9aa7b0"/><path d="M6.3 1.3 V4.4 H2.7Z" fill="#9aa7b0" opacity="0.75"/><text x="5.6" y="15.7" font-family="Liberation Sans, sans-serif" font-style="italic" font-weight="bold" font-size="11.4" fill="#40b6e0" stroke="#40b6e0" stroke-width="0.35">m</text></svg>
<div class="t" style="left:43px;top:341px;"><span style="letter-spacing:0.286px">mockito</span></div>
<div class="t g" style="left:94.2px;top:341px;"><span style="letter-spacing:0.323px">(root)</span></div>
<svg class="a" style="left:22.6px;top:364.4px" width="12" height="12" viewBox="0 0 12 12"><path d="M3.8 1.6 L8.3 6 L3.8 10.4" fill="none" stroke="#adadad" stroke-width="1.25"/></svg>
<svg class="a" style="left:42.5px;top:363px" width="17" height="17" viewBox="0 0 17 17"><path d="M0.5 2 H5.6 L7.2 4 H14.7 V13 H0.5Z" fill="#9aa7b0"/><circle cx="11.1" cy="11.8" r="5.5" fill="#3c3f41"/><path d="M15.38 10.80 L15.38 12.80 L14.05 12.76 L13.40 13.87 L14.11 15.01 L12.37 16.01 L11.74 14.83 L10.46 14.83 L9.83 16.01 L8.09 15.01 L8.80 13.87 L8.15 12.76 L6.82 12.80 L6.82 10.80 L8.15 10.84 L8.80 9.73 L8.09 8.59 L9.83 7.59 L10.46 8.77 L11.74 8.77 L12.37 7.59 L14.11 8.59 L13.40 9.73 L14.05 10.84Z M9.60 11.80 a1.50 1.50 0 1 0 3.00 0 a1.50 1.50 0 1 0 -3.00 0Z" fill="#40b6e0" fill-rule="evenodd"/></svg>
<div class="t" style="left:60.8px;top:361px;"><span style="letter-spacing:-0.220px">Lifecycle</span></div>
<svg class="a" style="left:22.6px;top:384.4px" width="12" height="12" viewBox="0 0 12 12"><path d="M3.8 1.6 L8.3 6 L3.8 10.4" fill="none" stroke="#adadad" stroke-width="1.25"/></svg>
<svg class="a" style="left:42.5px;top:383px" width="17" height="17" viewBox="0 0 17 17"><path d="M0.5 2 H5.6 L7.2 4 H14.7 V13 H0.5Z" fill="#9aa7b0"/><circle cx="11.1" cy="11.8" r="5.5" fill="#3c3f41"/><path d="M15.38 10.80 L15.38 12.80 L14.05 12.76 L13.40 13.87 L14.11 15.01 L12.37 16.01 L11.74 14.83 L10.46 14.83 L9.83 16.01 L8.09 15.01 L8.80 13.87 L8.15 12.76 L6.82 12.80 L6.82 10.80 L8.15 10.84 L8.80 9.73 L8.09 8.59 L9.83 7.59 L10.46 8.77 L11.74 8.77 L12.37 7.59 L14.11 8.59 L13.40 9.73 L14.05 10.84Z M9.60 11.80 a1.50 1.50 0 1 0 3.00 0 a1.50 1.50 0 1 0 -3.00 0Z" fill="#40b6e0" fill-rule="evenodd"/></svg>
<div class="t" style="left:60.8px;top:381px;"><span style="letter-spacing:-0.220px">Plugins</span></div>
<svg class="a" style="left:22.6px;top:404.4px" width="12" height="12" viewBox="0 0 12 12"><path d="M3.8 1.6 L8.3 6 L3.8 10.4" fill="none" stroke="#adadad" stroke-width="1.25"/></svg>
<svg class="a" style="left:42.5px;top:403px" width="17" height="17" viewBox="0 0 17 17"><path d="M0.5 2 H5.6 L7.2 4 H14.7 V13 H0.5Z" fill="#9aa7b0"/><rect x="6.1" y="5.2" width="10" height="10" fill="#3c3f41"/><rect x="6.8" y="8" width="2.4" height="6" fill="#62b543"/><rect x="9.9" y="5.8" width="2.4" height="8.2" fill="#9aa7b0"/><rect x="13" y="8" width="2.4" height="6" fill="#40b6e0"/></svg>
<div class="t" style="left:60.8px;top:401px;"><span style="letter-spacing:-0.094px">Dependencies</span></div>
<svg class="a" style="left:4.6px;top:424.4px" width="12" height="12" viewBox="0 0 12 12"><path d="M1.6 3.8 L6 8.3 L10.4 3.8" fill="none" stroke="#adadad" stroke-width="1.25"/></svg>
<svg class="a" style="left:24.5px;top:423px" width="17" height="17" viewBox="0 0 17 17"><path d="M6.9 1.1 H12.7 V8.6 H7.3 V15.3 H2.4 V5 H6.9Z" fill="#9aa7b0"/><path d="M6.3 1.3 V4.4 H2.7Z" fill="#9aa7b0" opacity="0.75"/><text x="5.6" y="15.7" font-family="Liberation Sans, sans-serif" font-style="italic" font-weight="bold" font-size="11.4" fill="#40b6e0" stroke="#40b6e0" stroke-width="0.35">m</text></svg>
<div class="t" style="left:43px;top:421px;"><span style="letter-spacing:0.146px">spring-event</span></div>
<div class="t g" style="left:120.6px;top:421px;"><span style="letter-spacing:0.290px">(root)</span></div>
<svg class="a" style="left:22.6px;top:444.4px" width="12" height="12" viewBox="0 0 12 12"><path d="M3.8 1.6 L8.3 6 L3.8 10.4" fill="none" stroke="#adadad" stroke-width="1.25"/></svg>
<svg class="a" style="left:42.5px;top:443px" width="17" height="17" viewBox="0 0 17 17"><path d="M0.5 2 H5.6 L7.2 4 H14.7 V13 H0.5Z" fill="#9aa7b0"/><circle cx="11.1" cy="11.8" r="5.5" fill="#3c3f41"/><path d="M15.38 10.80 L15.38 12.80 L14.05 12.76 L13.40 13.87 L14.11 15.01 L12.37 16.01 L11.74 14.83 L10.46 14.83 L9.83 16.01 L8.09 15.01 L8.80 13.87 L8.15 12.76 L6.82 12.80 L6.82 10.80 L8.15 10.84 L8.80 9.73 L8.09 8.59 L9.83 7.59 L10.46 8.77 L11.74 8.77 L12.37 7.59 L14.11 8.59 L13.40 9.73 L14.05 10.84Z M9.60 11.80 a1.50 1.50 0 1 0 3.00 0 a1.50 1.50 0 1 0 -3.00 0Z" fill="#40b6e0" fill-rule="evenodd"/></svg>
<div class="t" style="left:60.8px;top:441px;"><span style="letter-spacing:-0.220px">Lifecycle</span></div>
<svg class="a" style="left:22.6px;top:464.4px" width="12" height="12" viewBox="0 0 12 12"><path d="M3.8 1.6 L8.3 6 L3.8 10.4" fill="none" stroke="#adadad" stroke-width="1.25"/></svg>
<svg class="a" style="left:42.5px;top:463px" width="17" height="17" viewBox="0 0 17 17"><path d="M0.5 2 H5.6 L7.2 4 H14.7 V13 H0.5Z" fill="#9aa7b0"/><circle cx="11.1" cy="11.8" r="5.5" fill="#3c3f41"/><path d="M15.38 10.80 L15.38 12.80 L14.05 12.76 L13.40 13.87 L14.11 15.01 L12.37 16.01 L11.74 14.83 L10.46 14.83 L9.83 16.01 L8.09 15.01 L8.80 13.87 L8.15 12.76 L6.82 12.80 L6.82 10.80 L8.15 10.84 L8.80 9.73 L8.09 8.59 L9.83 7.59 L10.46 8.77 L11.74 8.77 L12.37 7.59 L14.11 8.59 L13.40 9.73 L14.05 10.84Z M9.60 11.80 a1.50 1.50 0 1 0 3.00 0 a1.50 1.50 0 1 0 -3.00 0Z" fill="#40b6e0" fill-rule="evenodd"/></svg>
<div class="t" style="left:60.8px;top:461px;"><span style="letter-spacing:-0.220px">Plugins</span></div>
<svg class="a" style="left:22.6px;top:484.4px" width="12" height="12" viewBox="0 0 12 12"><path d="M3.8 1.6 L8.3 6 L3.8 10.4" fill="none" stroke="#adadad" stroke-width="1.25"/></svg>
<svg class="a" style="left:42.5px;top:483px" width="17" height="17" viewBox="0 0 17 17"><path d="M0.5 2 H5.6 L7.2 4 H14.7 V13 H0.5Z" fill="#9aa7b0"/><rect x="6.1" y="5.2" width="10" height="10" fill="#3c3f41"/><rect x="6.8" y="8" width="2.4" height="6" fill="#62b543"/><rect x="9.9" y="5.8" width="2.4" height="8.2" fill="#9aa7b0"/><rect x="13" y="8" width="2.4" height="6" fill="#40b6e0"/></svg>
<div class="t" style="left:60.8px;top:481px;"><span style="letter-spacing:-0.094px">Dependencies</span></div>
<svg class="a" style="left:4.6px;top:504.4px" width="12" height="12" viewBox="0 0 12 12"><path d="M3.8 1.6 L8.3 6 L3.8 10.4" fill="none" stroke="#adadad" stroke-width="1.25"/></svg>
<svg class="a" style="left:24.5px;top:503px" width="17" height="17" viewBox="0 0 17 17"><path d="M6.9 1.1 H12.7 V8.6 H7.3 V15.3 H2.4 V5 H6.9Z" fill="#9aa7b0"/><path d="M6.3 1.3 V4.4 H2.7Z" fill="#9aa7b0" opacity="0.75"/><text x="5.6" y="15.7" font-family="Liberation Sans, sans-serif" font-style="italic" font-weight="bold" font-size="11.4" fill="#40b6e0" stroke="#40b6e0" stroke-width="0.35">m</text></svg>
<div class="t" style="left:42.5px;top:501px;"><span style="letter-spacing:0.241px">template</span></div>
</div>
<svg class="a" style="left:5px;top:63px" width="16" height="16" viewBox="0 0 16 16"><path d="M14.43 6.49 L14.43 9.51 L12.57 9.48 L11.57 11.21 L12.52 12.81 L9.91 14.32 L9.00 12.70 L7.00 12.70 L6.09 14.32 L3.48 12.81 L4.43 11.21 L3.43 9.48 L1.57 9.51 L1.57 6.49 L3.43 6.52 L4.43 4.79 L3.48 3.19 L6.09 1.68 L7.00 3.30 L9.00 3.30 L9.91 1.68 L12.52 3.19 L11.57 4.79 L12.57 6.52Z M5.80 8.00 a2.20 2.20 0 1 0 4.40 0 a2.20 2.20 0 1 0 -4.40 0Z" fill="#afb1b3" fill-rule="evenodd"/></svg>
<div class="a" style="left:33px;top:70px;width:12px;height:2px;background:#afb1b3;"></div>
<svg class="a" style="left:62px;top:64px" width="15" height="16" viewBox="0 0 15 16"><path d="M5 0 H12 V7 H2 V3Z" fill="#9aa7b0"/><path d="M4.6 0 V2.8 H2Z" fill="#4e5254" opacity="0.5"/><rect x="0" y="8" width="15" height="7.2" fill="#d5632d"/><path d="M5.4 9.3 L3 11.6 L5.4 13.9 M9.6 9.3 L12 11.6 L9.6 13.9" fill="none" stroke="#3a2a20" stroke-width="1.1"/></svg>
<svg class="a" style="left:283px;top:63px" width="16" height="16" viewBox="0 0 16 16"><circle cx="8" cy="8" r="7" fill="#3a8fae"/><text x="8.1" y="11" text-anchor="middle" font-family="Liberation Sans, sans-serif" font-weight="bold" font-size="8.2" fill="#22404d">C</text></svg>
<svg class="a" style="left:444px;top:63.4px" width="16" height="16" viewBox="0 0 16 16"><circle cx="8" cy="8" r="7" fill="#3a8fae"/><text x="8.1" y="11" text-anchor="middle" font-family="Liberation Sans, sans-serif" font-weight="bold" font-size="8.2" fill="#22404d">C</text><path d="M11.8 -0.6 V4.2 L9 1.8Z" fill="#e5642d"/><path d="M13.2 -0.6 V4.2 L16 1.8Z" fill="#62b543"/></svg>
<svg class="a" style="left:259.5px;top:67px" width="9" height="9" viewBox="0 0 9 9"><path d="M0.5 0.5 L8 8 M8 0.5 L0.5 8" stroke="#6c7072" stroke-width="1" fill="none"/></svg>
<svg class="a" style="left:420.8px;top:67px" width="9" height="9" viewBox="0 0 9 9"><path d="M0.5 0.5 L8 8 M8 0.5 L0.5 8" stroke="#6c7072" stroke-width="1" fill="none"/></svg>
<svg class="a" style="left:646px;top:67px" width="9" height="9" viewBox="0 0 9 9"><path d="M0.5 0.5 L8 8 M8 0.5 L0.5 8" stroke="#6c7072" stroke-width="1" fill="none"/></svg>
<svg class="a" style="left:666px;top:67px" width="12" height="8" viewBox="0 0 12 8"><path d="M1 1 L6 6 L11 1" fill="none" stroke="#c0c0c0" stroke-width="1.6"/></svg>
<svg class="a" style="left:827px;top:35px" width="16" height="15" viewBox="0 0 16 15"><path d="M1.4 6.6 L7.8 1.6" stroke="#499c54" stroke-width="3.3" fill="none"/><path d="M4.6 4.2 L14.2 13" stroke="#499c54" stroke-width="2.9" fill="none"/></svg>
<svg class="a" style="left:865px;top:38px" width="13" height="10" viewBox="0 0 13 10"><path d="M5.2 0 V9.6 L0 4.8Z" fill="#8a4a32"/><path d="M7 0 V9.6 L12.2 4.8Z" fill="#4a6e42"/></svg>
<svg class="a" style="left:1064px;top:40.5px" width="9" height="6" viewBox="0 0 9 6"><path d="M0 0 H8.6 L4.3 5.4Z" fill="#9c9fa1"/></svg>
<svg class="a" style="left:1096px;top:37px" width="10" height="12" viewBox="0 0 10 12"><path d="M0 0 L9.8 6 L0 12Z" fill="#499c54"/></svg>
<svg class="a" style="left:1119.5px;top:36px" width="13" height="14" viewBox="0 0 13 14"><path d="M4 1.9 L2.7 0.3 M9 1.9 L10.3 0.3 M0.6 5.4 H12.4 M0.4 8.4 H12.6 M0.6 11.4 H12.4" stroke="#499c54" stroke-width="1.3" fill="none"/><ellipse cx="6.5" cy="8.2" rx="4.3" ry="5.3" fill="#499c54"/><path d="M3.5 3.6 A3 3 0 0 1 9.5 3.6Z" fill="#499c54"/><path d="M2.4 4.1 H10.6" stroke="#3c3f41" stroke-width="0.9" fill="none"/><path d="M3.6 7 H9.4 M3.6 10 H9.4" stroke="#3c3f41" stroke-width="0.8" fill="none" opacity="0.85"/></svg>
<svg class="a" style="left:1144.5px;top:37px" width="16" height="14" viewBox="0 0 16 14"><path d="M0 1 L5 0 L10 1 V3.5 H5.2 V11.8 C2 10.6 0 8.4 0 5.5Z" fill="#afb1b3"/><path d="M5.2 3.5 H10 V6 L8 5 V10 L5.2 11.8Z" fill="#6e7173"/><path d="M8.2 5 L15 9.2 L8.2 13.4Z" fill="#499c54"/></svg>
<svg class="a" style="left:1168.6px;top:36px" width="16" height="15" viewBox="0 0 16 15"><path d="M11.6 4.5 A6 6 0 1 0 7 12.4" fill="none" stroke="#afb1b3" stroke-width="1.3"/><path d="M6.4 3.4 V6.6 L4.4 8.8" fill="none" stroke="#afb1b3" stroke-width="1.2"/><path d="M8.6 6 L15.2 10.2 L8.6 14.4Z" fill="#db5860"/></svg>
<svg class="a" style="left:1191px;top:41.6px" width="8" height="5" viewBox="0 0 8 5"><path d="M0 0 H7.8 L3.9 4.6Z" fill="#afb1b3"/></svg>
<div class="a" style="left:1210px;top:38px;width:10px;height:10px;background:#5b5d5f;"></div>
<div class="a" style="left:1231px;top:33px;width:1px;height:20px;background:#515456;"></div>
<svg class="a" style="left:695px;top:92px" width="14" height="14" viewBox="0 0 14 14"><path d="M11.6 4.4 A5.3 5.3 0 0 0 1.9 5.6 M2.4 9.6 A5.3 5.3 0 0 0 12.1 8.4" fill="none" stroke="#afb1b3" stroke-width="1.5"/><path d="M13.2 2 V6.2 H9Z M0.8 12 V7.8 H5Z" fill="#afb1b3"/></svg>
<svg class="a" style="left:721px;top:93px" width="16" height="15" viewBox="0 0 16 15"><path d="M0 0 H5 L6.5 2 H12 V7.2 A4.4 4.4 0 0 0 8 9.6 H0Z" fill="#afb1b3"/><path d="M14.6 9 A3.2 3.2 0 0 0 8.8 9.6 M8.8 12.2 A3.2 3.2 0 0 0 14.6 11.6" fill="none" stroke="#afb1b3" stroke-width="1.1"/><path d="M15.4 7 V10 H12.4Z M8 14.2 V11.2 H11Z" fill="#afb1b3"/></svg>
<svg class="a" style="left:748px;top:92px" width="15" height="16" viewBox="0 0 15 16"><path d="M6.2 1 V7.4 M2.6 4.2 L6.2 7.8 L9.8 4.2" fill="none" stroke="#afb1b3" stroke-width="1.7"/><rect x="0" y="9.9" width="12.4" height="1.7" fill="#afb1b3"/><path d="M9.4 13 H14.6 L12 15.4Z" fill="#afb1b3"/></svg>
<div class="a" style="left:770px;top:89px;width:1px;height:20px;background:#555759;"></div>
<svg class="a" style="left:782px;top:94px" width="10" height="10" viewBox="0 0 10 10"><path d="M5 0 V10 M0 5 H10" stroke="#afb1b3" stroke-width="1.5" fill="none"/></svg>
<div class="a" style="left:803px;top:89px;width:1px;height:20px;background:#555759;"></div>
<svg class="a" style="left:816px;top:93px" width="10" height="12" viewBox="0 0 10 12"><path d="M0 0 L9.6 6 L0 12Z" fill="#499c54"/></svg>
<svg class="a" style="left:837px;top:90px" width="18" height="18" viewBox="0 0 18 18"><text x="0.5" y="14" font-family="Liberation Sans, sans-serif" font-style="italic" font-weight="bold" font-size="19" fill="#afb1b3" stroke="#afb1b3" stroke-width="0.35">m</text></svg>
<svg class="a" style="left:865px;top:92.5px" width="14" height="13" viewBox="0 0 14 13"><rect x="0" y="5" width="5.4" height="3.1" fill="#afb1b3"/><rect x="8.6" y="5" width="5.4" height="3.1" fill="#afb1b3"/><path d="M7 0 L4.2 13 M9.8 0 L7 13" stroke="#afb1b3" stroke-width="1.7" fill="none"/></svg>
<svg class="a" style="left:891px;top:92px" width="14" height="14" viewBox="0 0 14 14"><circle cx="7" cy="7" r="7" fill="#3a8fb7"/><path d="M8.4 2.4 L4 7.6 H6.8 L5.8 11.6 L10.2 6.2 H7.4Z" fill="#2b3a42"/></svg>
<svg class="a" style="left:917px;top:92.2px" width="14" height="14" viewBox="0 0 14 14"><rect x="0" y="0" width="14" height="2.6" fill="#9aa7b0"/><rect x="0" y="11" width="14" height="2.6" fill="#9aa7b0"/><path d="M3.6 10.4 V5.2 M10.4 10.4 V5.2" stroke="#40b6e0" stroke-width="1.1" fill="none" stroke-dasharray="1.2 0.8"/><path d="M1.2 6.6 L3.6 3.6 L6 6.6Z M8 6.6 L10.4 3.6 L12.8 6.6Z" fill="#40b6e0"/></svg>
<svg class="a" style="left:944px;top:92.2px" width="13" height="14" viewBox="0 0 13 14"><rect x="0" y="6" width="12.4" height="1.5" fill="#afb1b3"/><path d="M3 0.6 H9.4 L6.2 4.4Z M3 13 H9.4 L6.2 9.2Z" fill="#afb1b3"/></svg>
<div class="a" style="left:966px;top:89px;width:1px;height:20px;background:#555759;"></div>
<svg class="a" style="left:976px;top:92.4px" width="16" height="16" viewBox="0 0 16 16"><path d="M1.6 12.6 L8.6 5.6" stroke="#afb1b3" stroke-width="3" fill="none" stroke-linecap="butt"/><circle cx="10" cy="4.2" r="3.8" fill="#afb1b3"/><path d="M9.4 4.8 L11.2 -0.6 L15.4 3.4Z" fill="#3c3f41"/><path d="M10 12.8 H15 L12.5 15.4Z" fill="#afb1b3"/></svg>
<div class="a" style="left:529px;top:85px;width:108px;height:21px;background:#2b2b2b;"></div>
<svg class="a" style="left:536.7px;top:93px" width="11" height="11" viewBox="0 0 11 11"><circle cx="5.2" cy="5.2" r="5.2" fill="#b32b2b"/><rect x="4.4" y="2" width="1.7" height="4.2" fill="#e6c6c6"/><rect x="4.4" y="7.2" width="1.7" height="1.6" fill="#e6c6c6"/></svg>
<div class="t" style="left:550.6px;top:89px;font-size:13px;color:#bbbbbb;">1</div>
<svg class="a" style="left:566px;top:93px" width="12" height="12" viewBox="0 0 12 12"><path d="M0.8 4.6 L4.2 7.8 L10.8 0.6" fill="none" stroke="#3fa04b" stroke-width="2.2"/><path d="M0 11.6 L2 10.2 L4 11.6 L6 10.2 L8 11.6 L10 10.2 L11.4 11.2" fill="none" stroke="#3fa04b" stroke-width="0.9"/></svg>
<div class="t" style="left:580.6px;top:89px;font-size:13px;color:#bbbbbb;">2</div>
<svg class="a" style="left:599px;top:94.5px" width="9" height="6" viewBox="0 0 9 6"><path d="M0.4 5.4 L4.2 1 L8 5.4" fill="none" stroke="#b4b4b4" stroke-width="1.3"/></svg>
<svg class="a" style="left:620px;top:95.5px" width="9" height="6" viewBox="0 0 9 6"><path d="M0.4 0.4 L4.2 4.8 L8 0.4" fill="none" stroke="#b4b4b4" stroke-width="1.3"/></svg>
<div class="a" style="left:622px;top:152px;width:14px;height:2px;background:#bb2c2c;"></div>
<svg class="a" style="left:0;top:0" width="1234" height="845" viewBox="0 0 1234 845"><path d="M498.6 195.4 L742.6 334.6 L745.1 332.3 L756.1 346.5 L736.9 344.5 L738.7 342.4 L498.6 196.9Z" fill="#fb3334"/></svg>
<div class="a" style="left:847px;top:302px;white-space:pre;font-size:16px;line-height:22px;color:#f23535;font-family:'Liberation Sans','Noto Sans CJK SC',sans-serif;">单击运行</div>
</body></html>
